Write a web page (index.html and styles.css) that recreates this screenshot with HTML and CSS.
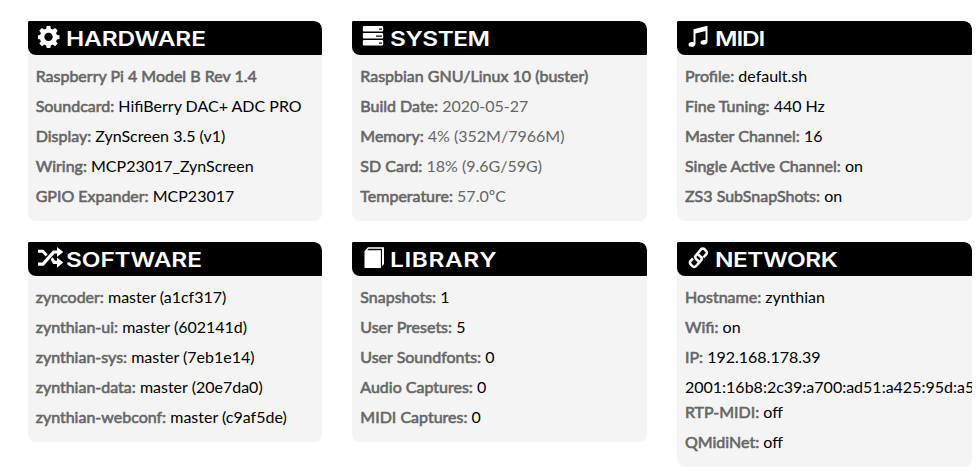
FILE: index.html
```html
<!DOCTYPE html>
<html lang="en">
  <head>
    <meta charset="UTF-8" />
    <meta name="viewport" content="width=device-width, initial-scale=1.0" />
    <title>Dashboard</title>
    <link rel="stylesheet" href="styles.css">
  </head>
  <body>
    <main class="dashboard">
      <section class="card">
        <h2>
          <svg class="icon" viewBox="0 0 26 24"><path fill-rule="evenodd" d="M8.700 1h3.600l.5 2.800 2 .8 2.300-1.600 2.600 2.600-1.600 2.300.8 2 2.600.4v3.600l-2.600.5-.8 2 1.600 2.200-2.600 2.600-2.300-1.600-2 .8-.5 2.600H8.700l-.5-2.600-2-.8-2.300 1.600-2.600-2.600 1.600-2.200-.8-2L0 13.900v-3.600l2.100-.4.8-2-1.600-2.300 2.600-2.600 2.300 1.600 2-.8zM10.500 7.700a4.200 4.200 0 1 0 0 8.400 4.200 4.200 0 0 0 0-8.400z"/></svg>
          <span class="title hardware">HARDWARE</span>
        </h2>
        <div class="content">
          <p><b>Raspberry Pi 4 Model B Rev 1.4</b></p>
          <p><b>Soundcard:</b> HifiBerry DAC+ ADC PRO</p>
          <p><b>Display:</b> ZynScreen 3.5 (v1)</p>
          <p><b>Wiring:</b> MCP23017_ZynScreen</p>
          <p><b>GPIO Expander:</b> MCP23017</p>
        </div>
      </section>

      <section class="card">
        <h2>
          <svg class="icon" viewBox="0 0 26 24"><path fill-rule="evenodd" d="M2 1h18a1.200 1.200 0 0 1 1.200 1.200v3A1.200 1.200 0 0 1 20 6.400H2A1.200 1.200 0 0 1 .8 5.200v-3A1.200 1.200 0 0 1 2 1zM17 3.500v1.300h3V3.500zM2 8h18a1.200 1.200 0 0 1 1.200 1.200v3a1.200 1.200 0 0 1-1.200 1.200H2a1.200 1.200 0 0 1-1.200-1.200v-3A1.200 1.200 0 0 1 2 8zM14 10.500v1.300h6v-1.300zM2 15h18a1.200 1.200 0 0 1 1.200 1.200v3a1.200 1.200 0 0 1-1.200 1.200H2a1.200 1.200 0 0 1-1.200-1.200v-3A1.200 1.200 0 0 1 2 15zM17 17.500v1.300h3v-1.300z"/></svg>
          <span class="title system">SYSTEM</span>
        </h2>
        <div class="content muted">
          <p><b>Raspbian GNU/Linux 10 (buster)</b></p>
          <p><b>Build Date:</b> 2020-05-27</p>
          <p><b>Memory:</b> 4% (352M/7966M)</p>
          <p><b>SD Card:</b> 18% (9.6G/59G)</p>
          <p><b>Temperature:</b> 57.0ºC</p>
        </div>
      </section>

      <section class="card">
        <h2>
          <svg class="icon" viewBox="0 0 26 24"><path d="M6.500 4.200 20.500.7V16.500c0 2-1.700 3.300-3.800 3.300-2 0-3.200-1-3.200-2.300 0-1.800 2.200-3 5-2.400V6L8.500 8.400V18.700c0 2-1.700 3.200-3.800 3.200-2 0-3.200-1-3.200-2.300 0-1.800 2.200-3 5-2.400z"/></svg>
          <span class="title midi">MIDI</span>
        </h2>
        <div class="content">
          <p><b>Profile:</b> default.sh</p>
          <p><b>Fine Tuning:</b> 440 Hz</p>
          <p><b>Master Channel:</b> 16</p>
          <p><b>Single Active Channel:</b> on</p>
          <p><b>ZS3 SubSnapShots:</b> on</p>
        </div>
      </section>

      <section class="card">
        <h2>
          <svg class="icon" viewBox="0 0 26 24"><path d="M0 3.700h5.500l4.200 4.600-2 2.200L4.200 6.800H0zM0 16.500h4.200L15 4.400h4V1l6.300 5-6.300 5V7.600h-2.500L5.700 19.700H0zM12.600 13.500l2-2.200 2.500 3.400H19v-3.300l6.300 5.100-6.300 5.200V18h-3.800z"/></svg>
          <span class="title software">SOFTWARE</span>
        </h2>
        <div class="content">
          <p><b>zyncoder:</b> master (a1cf317)</p>
          <p><b>zynthian-ui:</b> master (602141d)</p>
          <p><b>zynthian-sys:</b> master (7eb1e14)</p>
          <p><b>zynthian-data:</b> master (20e7da0)</p>
          <p><b>zynthian-webconf:</b> master (c9af5de)</p>
        </div>
      </section>

      <section class="card">
        <h2>
          <svg class="icon" viewBox="0 0 26 24"><path d="M2.500 5 6 1.200h16V18l-2 2.200V2.800H6.500L5.200 4.200H18.900V22H2.500z"/></svg>
          <span class="title library">LIBRARY</span>
        </h2>
        <div class="content">
          <p><b>Snapshots:</b> 1</p>
          <p><b>User Presets:</b> 5</p>
          <p><b>User Soundfonts:</b> 0</p>
          <p><b>Audio Captures:</b> 0</p>
          <p><b>MIDI Captures:</b> 0</p>
        </div>
      </section>

      <section class="card">
        <h2>
          <svg class="icon" viewBox="0 0 26 24"><g class="chain"><path d="M11.800 15.700 9 12.800a2.500 2.500 0 0 1 0-3.500l5-5.900a2.500 2.500 0 0 1 3.600 0l1.500 1.500a2.500 2.500 0 0 1 0 3.600L16.400 11.500"/><path d="M10.500 8.100l3.500 2.900a2.500 2.500 0 0 1 0 3.500l-5 5.600a2.500 2.500 0 0 1-3.600 0l-1.700-1.700a2.500 2.500 0 0 1 0-3.600L6 12.500"/></g></svg>
          <span class="title network">NETWORK</span>
        </h2>
        <div class="content">
          <p><b>Hostname:</b> zynthian</p>
          <p><b>Wifi:</b> on</p>
          <p><b>IP:</b> 192.168.178.39</p>
          <p class="ipv6">2001:16b8:2c39:a700:ad51:a425:95d:a5</p>
          <p><b>RTP-MIDI:</b> off</p>
          <p><b>QMidiNet:</b> off</p>
        </div>
      </section>
    </main>
  </body>
</html>
```
FILE: styles.css
```css
body {
  margin: 0;
  background-color: #fff;
  color: #000;
  font-family: Lato, sans-serif;
  font-size: 16px;
  line-height: 25px;
  overflow: hidden;
}

.dashboard {
  display: grid;
  grid-template-columns: repeat(3, 294.66px);
  align-items: start;
  column-gap: 30px;
  row-gap: 21px;
  padding: 21px 0 0 27.66px;
}

.card {
  overflow: hidden;
  border-radius: 1px 8px 8px 8px;
  background-color: #f4f4f4;
}

h2 {
  display: flex;
  align-items: center;
  height: 34px;
  margin: 0;
  padding-left: 10px;
  border-radius: 1px 8px 1px 8px;
  background-color: #000;
  color: #fff;
  font-family: Inter, sans-serif;
  font-size: 20px;
  font-weight: 600;
}

.icon {
  flex: none;
  width: 26px;
  height: 24px;
  margin: -3px 2px 0 0;
  fill: #fff;
}

.chain {
  fill: none;
  stroke: #fff;
  stroke-width: 2.6;
}

.title {
  margin-top: 2px;
  transform: scaleX(1.22);
  transform-origin: left;
}

.hardware,
.software {
  letter-spacing: -0.1px;
}

.system,
.network {
  letter-spacing: -0.4px;
}

.midi {
  letter-spacing: -0.9px;
}

.library {
  letter-spacing: 0.5px;
}

.content {
  padding: 8px 0 8px 8px;
}

.content p {
  margin: 0 0 5px;
  white-space: nowrap;
}

.content b {
  color: #666;
  font-weight: 400;
  -webkit-text-stroke: 0.6px #666;
}

.muted {
  color: #666;
}

.content .ipv6 {
  margin: 0;
}
```
